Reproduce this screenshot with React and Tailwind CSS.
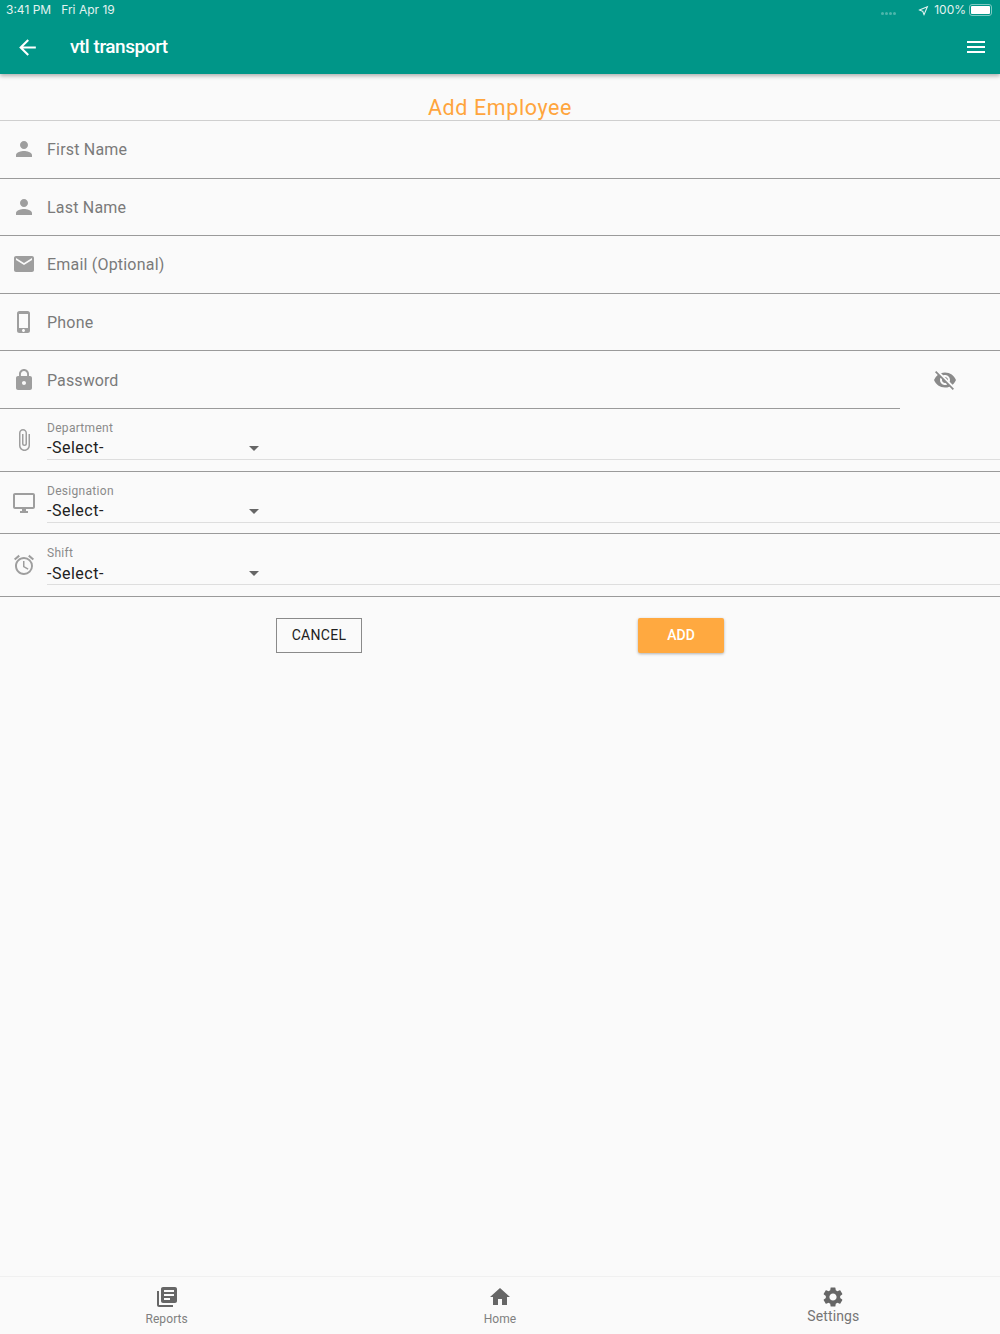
import React from "react";
import {
  MdAccessAlarm,
  MdArrowBack,
  MdAttachFile,
  MdEmail,
  MdHome,
  MdLibraryBooks,
  MdLock,
  MdMenu,
  MdOutlineDesktopWindows,
  MdOutlineNearMe,
  MdPerson,
  MdPhoneIphone,
  MdSettings,
  MdVisibilityOff,
} from "react-icons/md";

const inputs = [
  { label: "First Name", icon: MdPerson },
  { label: "Last Name", icon: MdPerson },
  { label: "Email (Optional)", icon: MdEmail },
  { label: "Phone", icon: MdPhoneIphone },
];

const selects = [
  { label: "Department", icon: MdAttachFile },
  { label: "Designation", icon: MdOutlineDesktopWindows },
  { label: "Shift", icon: MdAccessAlarm },
];

function InputRow({ label, icon: Icon }) {
  return (
    <div className="flex h-[57.6px] items-center border-b border-[#9a9a9a]">
      <div className="flex w-[47px] justify-center">
        <Icon className="text-[24px] text-[#9e9e9e]" />
      </div>
      <span className="pt-[2px] text-[16px] tracking-[0.2px] text-[#7a7a7a]">{label}</span>
    </div>
  );
}

function SelectRow({ label, icon: Icon }) {
  return (
    <div className="flex h-[62.6px] border-b border-[#9a9a9a]">
      <div className="flex w-[47px] justify-center pt-[19px]">
        <Icon className="text-[24px] text-[#9e9e9e]" />
      </div>
      <div className="flex-1 pt-[12px]">
        <div className="h-[39px] border-b border-[#dedede]">
          <div className="text-[12px] leading-[14px] tracking-[0.3px] text-[#8a8a8a]">{label}</div>
          <div className="flex h-[26px] w-[212px] items-center justify-between pt-[1px]">
            <span className="text-[16px] tracking-[0.5px] text-[#212121]">-Select-</span>
            <span className="h-0 w-0 border-x-[5px] border-t-[5px] border-x-transparent border-t-[#666666]" />
          </div>
        </div>
      </div>
    </div>
  );
}

function TabItem({ label, icon: Icon, big }) {
  return (
    <div className="flex flex-col items-center pt-[8px]">
      <Icon className="text-[24px] text-[#666666]" />
      <span className={big ? "text-[14px] leading-[14px] tracking-[0.1px] text-[#757575]" : "text-[12px] leading-[20px] tracking-[0.1px] text-[#808080]"}>
        {label}
      </span>
    </div>
  );
}

export default function App() {
  return (
    <div className="flex h-[1334px] flex-col bg-[#fafafa] font-['Roboto',sans-serif]">
      <header className="relative z-10 h-[74px] bg-[#009688] shadow-[0_2px_4px_rgba(0,0,0,0.3)]">
        <div className="flex h-[20px] items-center justify-between pl-[6px] pr-[8px] text-[#e3f2f0]">
          <div className="flex gap-[10px] font-['Inter',sans-serif] text-[12px]">
            <span>3:41 PM</span>
            <span>Fri Apr 19</span>
          </div>
          <div className="flex items-center">
            <div className="mr-[21px] mt-[7px] flex gap-[1px]">
              <i className="h-[3px] w-[3px] rounded-full bg-[#4db6ac]" />
              <i className="h-[3px] w-[3px] rounded-full bg-[#4db6ac]" />
              <i className="h-[3px] w-[3px] rounded-full bg-[#4db6ac]" />
              <i className="h-[3px] w-[3px] rounded-full bg-[#4db6ac]" />
            </div>
            <MdOutlineNearMe className="mr-[4px] text-[13px]" />
            <span className="mr-[3px] font-['Inter',sans-serif] text-[12px]">100%</span>
            <div className="rounded-[3px] border border-[#7fcac3] p-[1px]">
              <div className="h-[8px] w-[19px] rounded-[1px] bg-white" />
            </div>
          </div>
        </div>
        <div className="flex h-[54px] items-center justify-between pl-[15px] pr-[12px] text-white">
          <div className="flex items-center">
            <MdArrowBack className="text-[25px]" />
            <span className="ml-[30px] text-[19px] font-medium tracking-[-0.45px]">vtl transport</span>
          </div>
          <MdMenu className="text-[24px]" />
        </div>
      </header>

      <main className="flex-1">
        <h1 className="h-[47px] border-b border-[#cfcfcf] pt-[21px] text-center text-[21.5px] leading-[26px] tracking-[0.6px] text-[#ffa53d]">
          Add Employee
        </h1>
        {inputs.map((row) => (
          <InputRow key={row.label} {...row} />
        ))}
        <div className="flex h-[57.6px]">
          <div className="flex w-[900px] items-center border-b border-[#9a9a9a]">
            <div className="flex w-[47px] justify-center">
              <MdLock className="text-[24px] text-[#9e9e9e]" />
            </div>
            <span className="pt-[2px] text-[16px] tracking-[0.1px] text-[#7a7a7a]">Password</span>
          </div>
          <div className="flex flex-1 items-center pl-[33px]">
            <MdVisibilityOff className="text-[24px] text-[#8a8a8a]" />
          </div>
        </div>
        {selects.map((row) => (
          <SelectRow key={row.label} {...row} />
        ))}
        <div className="mt-[21px] flex">
          <div className="w-[276px]" />
          <button className="h-[35px] w-[86px] border border-[#8a8a8a] text-[14px] tracking-[0.3px] text-[#212121]">
            CANCEL
          </button>
          <div className="w-[276px]" />
          <button className="h-[35px] w-[86px] rounded-[2px] bg-[#ffa940] text-[14px] font-medium text-white shadow-[0_1px_3px_rgba(0,0,0,0.3)]">
            ADD
          </button>
        </div>
      </main>

      <nav className="grid h-[58px] grid-cols-3 border-t border-[#f0f0f0] bg-[#fafafa]">
        <TabItem label="Reports" icon={MdLibraryBooks} />
        <TabItem label="Home" icon={MdHome} />
        <TabItem label="Settings" icon={MdSettings} big />
      </nav>
    </div>
  );
}
